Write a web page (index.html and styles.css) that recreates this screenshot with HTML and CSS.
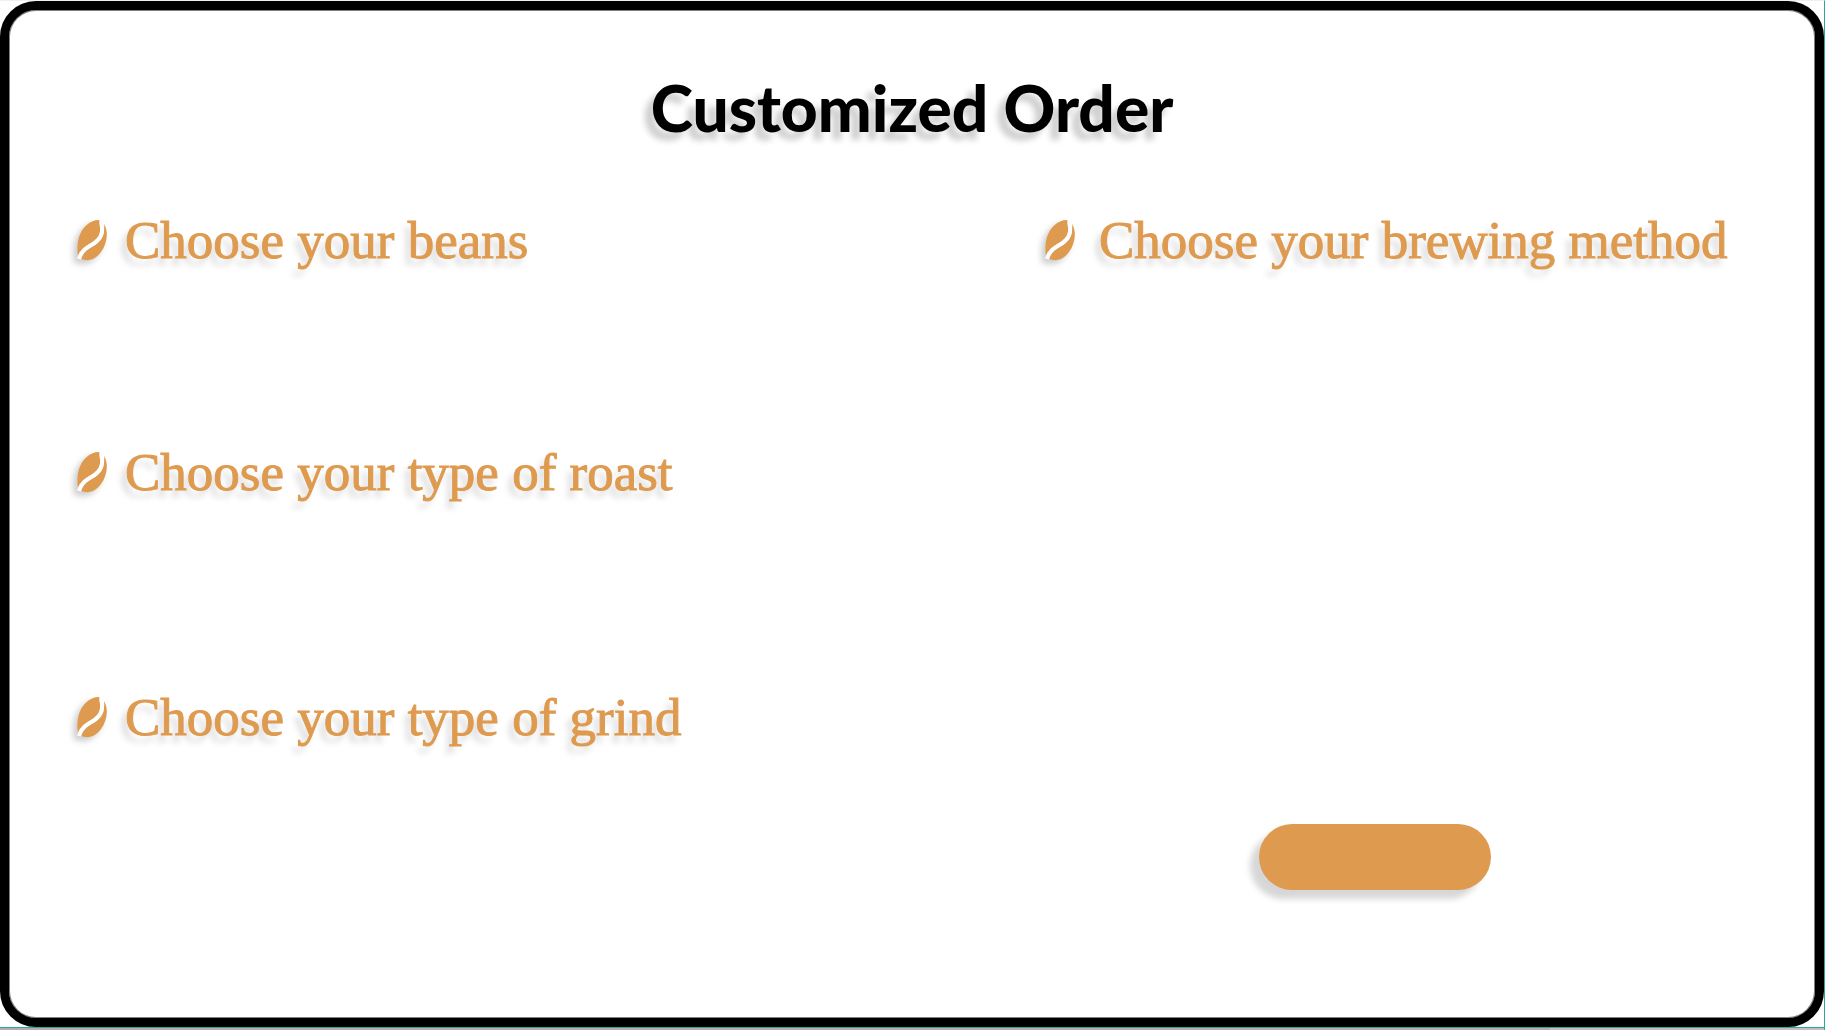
FILE: index.html
```html
<!DOCTYPE html>
<html lang="en">
<head>
<meta charset="utf-8">
<title>Customized Order</title>
<link rel="stylesheet" href="styles.css">
</head>
<body>
<svg width="0" height="0" class="sprite" aria-hidden="true">
  <symbol id="bean" viewBox="0 0 30 42">
    <path d="M22 1C12 1 5 9 2 18C0 25 0 31 1 37C4 30 9 27 14 24C22 19 26 12 22 1Z"/>
    <path d="M27 5C28 15 25 21 18 26C11 30 6 33 4 40C12 43 19 40 24 33C30 25 32 13 27 5Z"/>
    <path class="bean-crease" d="M24 3C27 14 24 20 16 25C9 29 4 32 2 40"/>
  </symbol>
</svg>
<div class="page">
  <main class="frame">
    <h1 class="title">Customized Order</h1>
    <form class="order">
      <div class="column">
        <section class="choice">
          <h2 class="heading"><svg class="bean" aria-hidden="true"><use href="#bean"/></svg>Choose your beans</h2>
        </section>
        <section class="choice choice-roast">
          <h2 class="heading"><svg class="bean" aria-hidden="true"><use href="#bean"/></svg>Choose your type of roast</h2>
        </section>
        <section class="choice">
          <h2 class="heading"><svg class="bean" aria-hidden="true"><use href="#bean"/></svg>Choose your type of grind</h2>
        </section>
      </div>
      <div class="column">
        <section class="choice choice-brewing">
          <h2 class="heading heading-wide"><svg class="bean" aria-hidden="true"><use href="#bean"/></svg>Choose your brewing method</h2>
        </section>
        <button class="submit" type="button" aria-label="Order"></button>
      </div>
    </form>
  </main>
  <div class="strip"></div>
</div>
</body>
</html>
```
FILE: styles.css
```css
* {
  box-sizing: border-box;
}

body {
  margin: 0;
  background: #fff;
}

.sprite {
  position: absolute;
}

.page {
  display: flex;
  flex-direction: column;
  min-height: 100vh;
  border-top: 1px solid #f0f0f0;
  border-right: 1px solid #2aa893;
}

.frame {
  flex: 1;
  padding: 58px 68px 40px;
  border: 9px solid #000;
  border-radius: 36px;
  box-shadow: inset 0 0 0 1px #808080;
}

.title {
  margin: 0;
  font: 900 64px/80px Lato, sans-serif;
  text-align: center;
  color: #000;
  text-shadow: -8px 8px 6px rgba(0, 0, 0, 0.2);
}

.order {
  display: grid;
  grid-template-columns: 968fr 702fr;
  margin-top: 62px;
}

.choice {
  min-height: 232px;
}

.choice-roast {
  min-height: 245px;
}

.choice-brewing {
  min-height: 614px;
}

.heading {
  display: flex;
  align-items: center;
  gap: 18px;
  margin: 0;
  font: 400 53px/60px "Liberation Serif", serif;
  white-space: nowrap;
  color: #de9a4f;
  -webkit-text-stroke: 1px #de9a4f;
  text-shadow: -5px 7px 6px rgba(0, 0, 0, 0.16);
}

.heading-wide {
  gap: 24px;
}

.bean {
  flex: none;
  width: 30px;
  height: 42px;
  fill: currentColor;
  filter: drop-shadow(-4px 4px 3px rgba(0, 0, 0, 0.2));
}

.bean-crease {
  fill: none;
  stroke: #fff;
  stroke-width: 4px;
}

.submit {
  display: block;
  width: 232px;
  height: 66px;
  margin-left: 214px;
  border: 0;
  border-radius: 33px;
  background: #de9a4f;
  box-shadow: -9px 9px 6px rgba(0, 0, 0, 0.16);
}

.strip {
  height: 3px;
  border-top: 1px solid #2aa893;
  background: linear-gradient(90deg, #b0b0b0 85%, #c0c0c0 85%);
}
```
